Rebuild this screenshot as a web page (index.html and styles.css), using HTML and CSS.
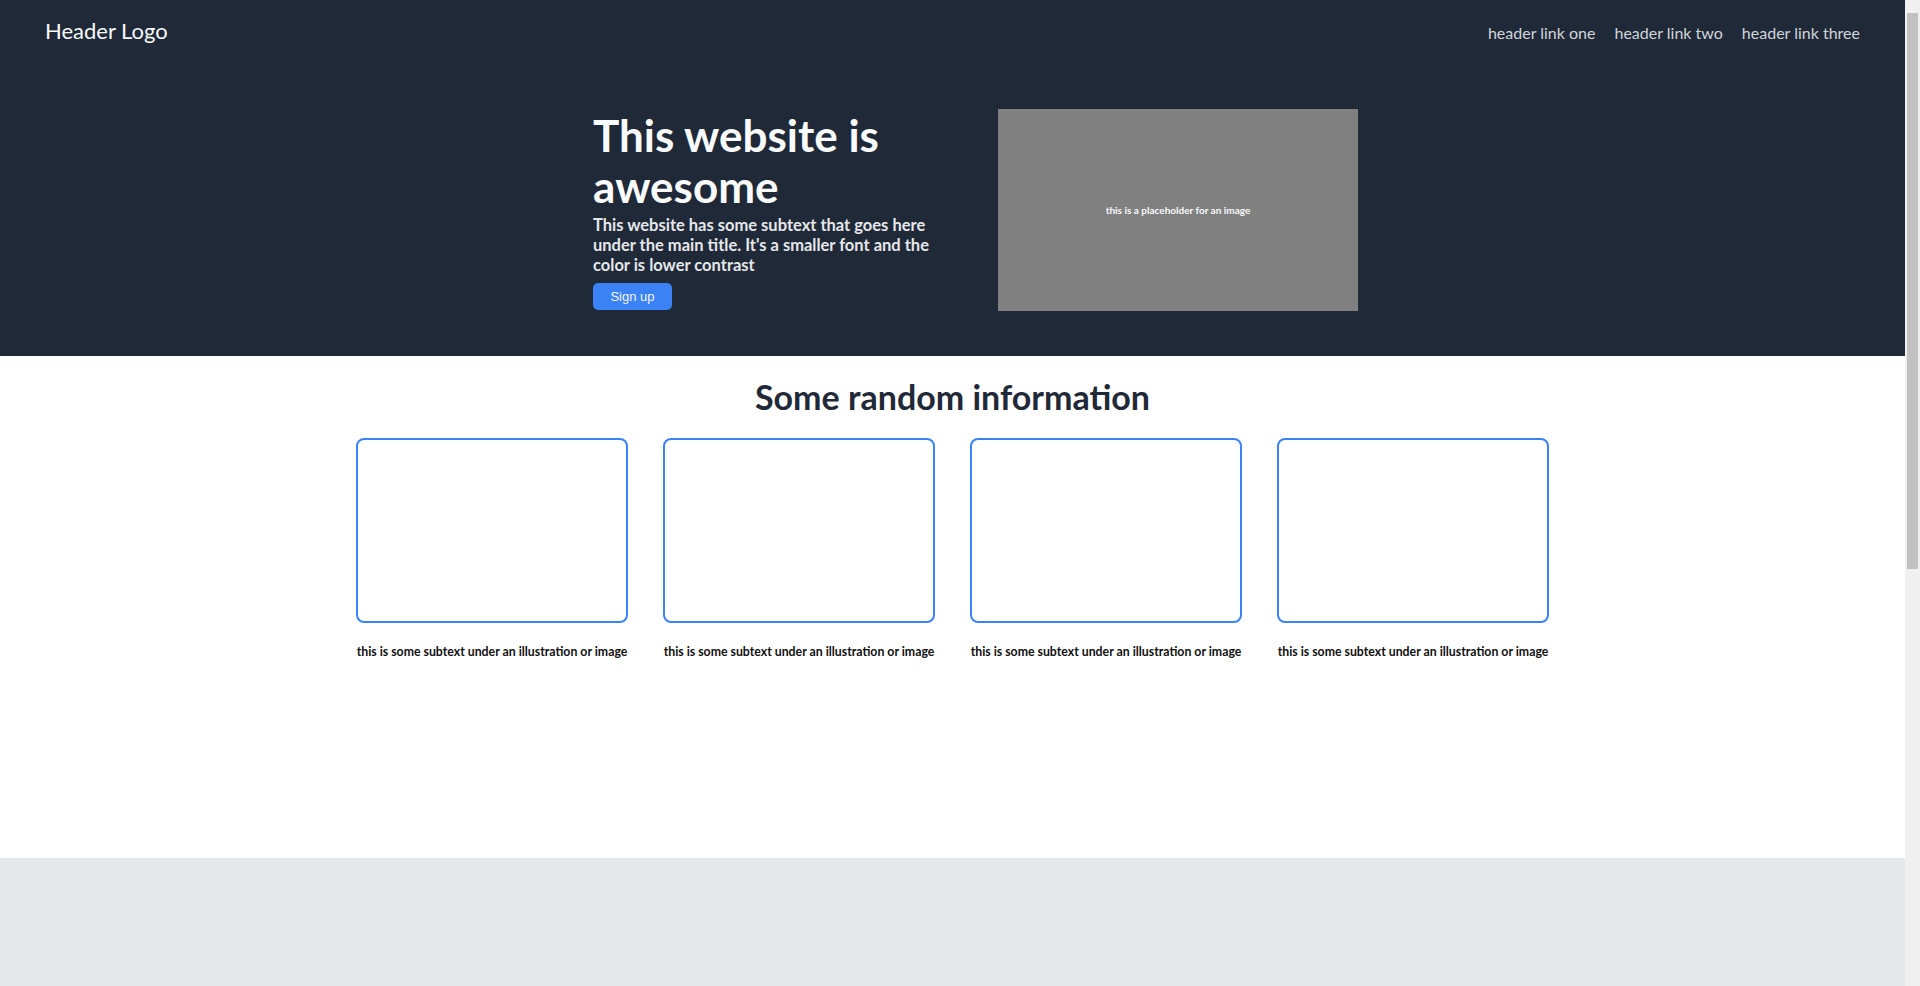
FILE: index.html
```html
<!DOCTYPE html>
<html lang="en">
<head>
    <meta charset="UTF-8">
    <meta name="viewport" content="width=device-width, initial-scale=1.0">
    <title>Landing page</title>
    <link rel="stylesheet" href="styles.css">
</head>
<body>
    <!-- top part: header + hero -->
    <div class="top">
        <div class="header">
            <div class="logo">Header Logo</div>
            <div class="links">
                <a href="#">header link one</a>
                <a href="#">header link two</a>
                <a href="#">header link three</a>
            </div>
        </div>

        <div class="hero">
            <div class="hero-text">
                <h1>This website is awesome</h1>
                <p class="subtext">This website has some subtext that goes here under the main title. It's a smaller font and the color is lower contrast</p>
                <button class="signup-btn">Sign up</button>
            </div>
            <div class="hero-image">this is a placeholder for an image</div>
        </div>
    </div>

    <!-- info section -->
    <div class="info">
        <h2>Some random information</h2>
        <div class="cards">
            <div class="card">
                <div class="card-img"></div>
                <p class="card-text">this is some subtext under an illustration or image</p>
            </div>
            <div class="card">
                <div class="card-img"></div>
                <p class="card-text">this is some subtext under an illustration or image</p>
            </div>
            <div class="card">
                <div class="card-img"></div>
                <p class="card-text">this is some subtext under an illustration or image</p>
            </div>
            <div class="card">
                <div class="card-img"></div>
                <p class="card-text">this is some subtext under an illustration or image</p>
            </div>
        </div>
    </div>

    <div class="footer"></div>
</body>
</html>
```

FILE: styles.css
```css
/* スクロールバー分の余白（右15px） */
html {
    background: linear-gradient(#c1c1c1, #c1c1c1) no-repeat right 2px top 13px / 11px 556px, #f0f0f0;
}

body {
    margin: 0 15px 0 0;
    background-color: white;
    font-family: 'Lato', 'Noto Sans', sans-serif;
}

/* ヘッダーとヒーロー */
.top {
    background-color: #1f2937;
    height: 356px;
}

.header {
    display: flex;
    justify-content: space-between;
    align-items: center;
    padding: 15px 45px 0 45px;
    height: 30px;
}

.logo {
    font-size: 22px;
    color: #f9fafb;
}

.links {
    display: flex;
    gap: 19px;
}

.links a {
    font-size: 16px;
    color: #d1d5db;
    text-decoration: none;
    padding-top: 4px;
}

.hero {
    display: flex;
    justify-content: center;
    align-items: center;
    gap: 45px;
    padding-left: 46px;
    margin-top: 64px;
}

.hero-text {
    width: 360px;
}

.hero h1 {
    margin: 0;
    font-size: 44px;
    line-height: 51px;
    color: #f9fafb;
    font-weight: bold;
}

.subtext {
    margin: 3px 0 0 0;
    font-size: 16.5px;
    line-height: 20px;
    font-weight: bold;
    color: #e5e7eb;
}

.signup-btn {
    margin-top: 8px;
    width: 79px;
    height: 27px;
    background-color: #3b82f6;
    color: #f3f4f6;
    border: none;
    border-radius: 5px;
    font-family: 'Liberation Sans', Arial, sans-serif;
    font-size: 13px;
    cursor: pointer;
}

.hero-image {
    width: 360px;
    height: 202px;
    background-color: #808080;
    color: #f9fafb;
    font-size: 10px;
    font-weight: bold;
    display: flex;
    justify-content: center;
    align-items: center;
}

/* 情報セクション */
.info {
    height: 502px;
    background-color: white;
}

.info h2 {
    margin: 0;
    padding-top: 19px;
    text-align: center;
    font-size: 34px;
    line-height: 44px;
    color: #1f2937;
}

.cards {
    display: flex;
    justify-content: center;
    gap: 35px;
    margin-top: 19px;
}

.card {
    width: 272px;
}

.card-img {
    height: 181px;
    border: 2px solid #3b82f6;
    border-radius: 8px;
}

.card-text {
    margin: 21px 0 0 0;
    font-size: 12.3px;
    font-weight: bold;
    text-align: center;
    color: #111;
}

.footer {
    height: 837px;
    background-color: #e5e7eb;
}
```
